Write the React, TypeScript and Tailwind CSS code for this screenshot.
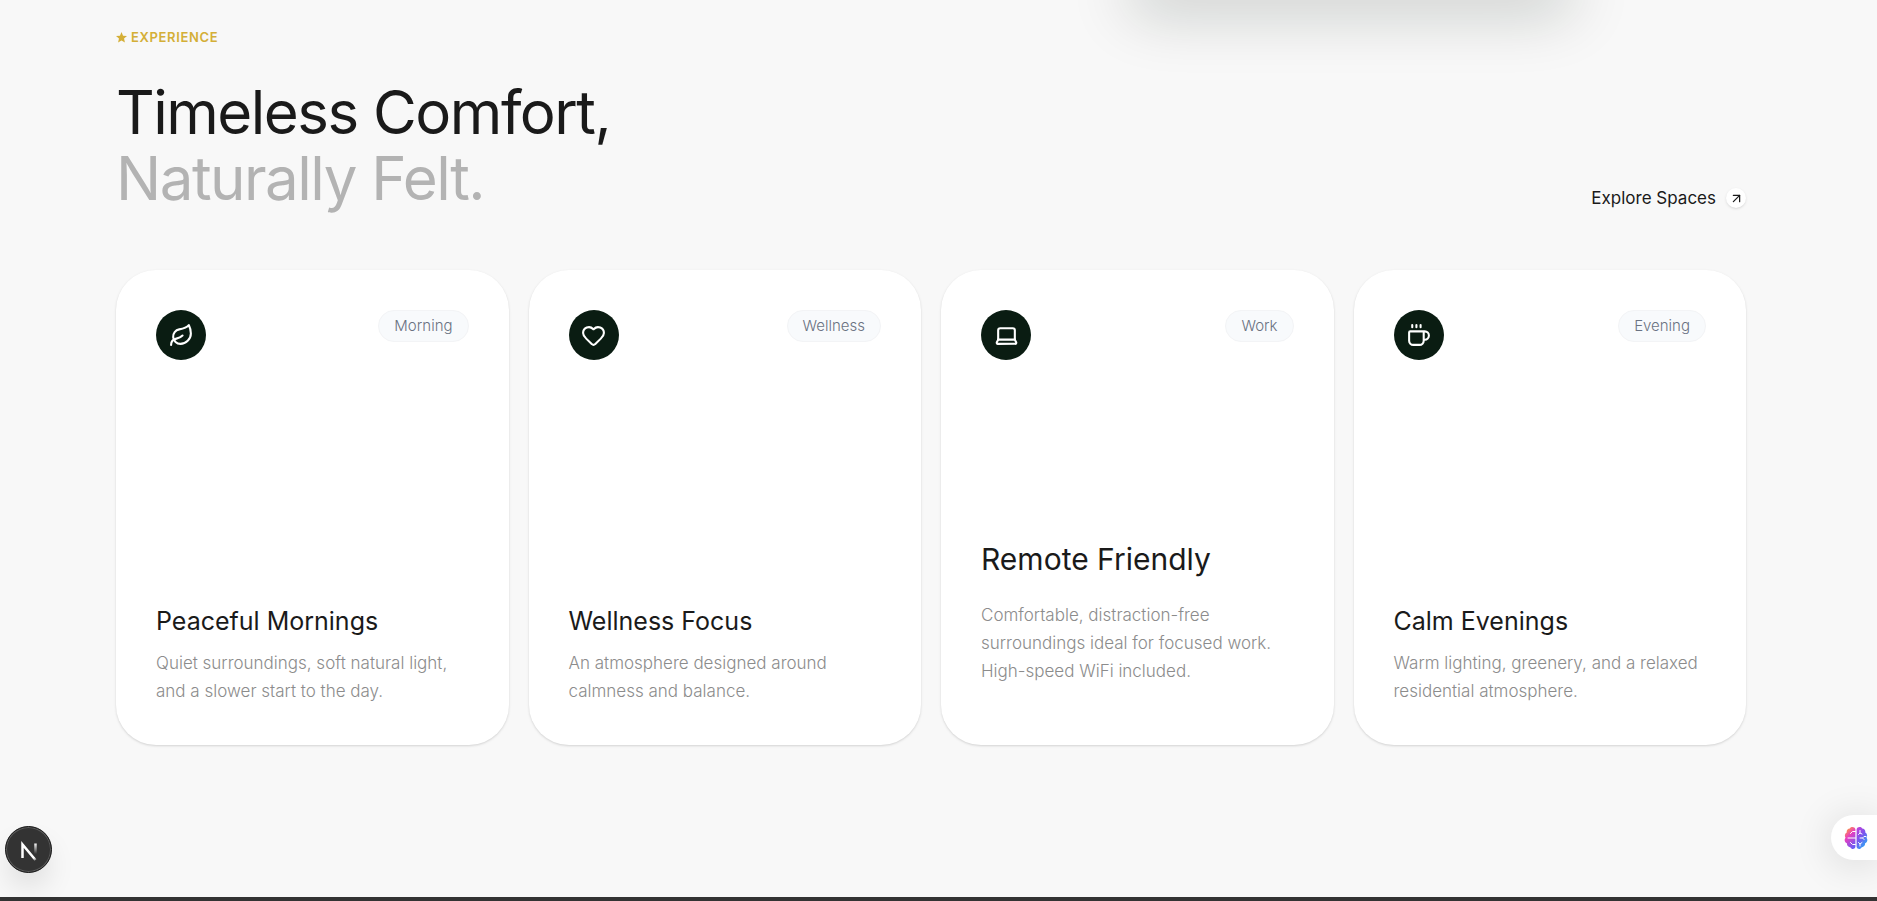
import { ArrowUpRight, Coffee, Heart, Laptop, Leaf, type LucideIcon } from "lucide-react";

type Experience = {
  icon: LucideIcon;
  tag: string;
  title: string;
  text: string;
  featured?: boolean;
};

const experiences: Experience[] = [
  {
    icon: Leaf,
    tag: "Morning",
    title: "Peaceful Mornings",
    text: "Quiet surroundings, soft natural light, and a slower start to the day.",
  },
  {
    icon: Heart,
    tag: "Wellness",
    title: "Wellness Focus",
    text: "An atmosphere designed around calmness and balance.",
  },
  {
    icon: Laptop,
    tag: "Work",
    title: "Remote Friendly",
    text: "Comfortable, distraction-free surroundings ideal for focused work. High-speed WiFi included.",
    featured: true,
  },
  {
    icon: Coffee,
    tag: "Evening",
    title: "Calm Evenings",
    text: "Warm lighting, greenery, and a relaxed residential atmosphere.",
  },
];

function ExperienceCard({ icon: Icon, tag, title, text, featured }: Experience) {
  return (
    <article className="flex min-h-[475px] flex-col justify-between rounded-[40px] bg-white p-10 shadow-[0_1px_3px_rgba(0,0,0,0.1),0_1px_2px_rgba(0,0,0,0.06)]">
      <div className="flex items-start justify-between">
        <span className="flex size-[50px] items-center justify-center rounded-full bg-[#0a1c12] text-white">
          <Icon size={25} strokeWidth={2} aria-hidden="true" />
        </span>
        <span className="rounded-full border border-gray-100 bg-[#f8fafc] px-[15px] py-1 text-[15px] leading-[22px] font-light text-gray-500">
          {tag}
        </span>
      </div>
      <div className={featured ? "pb-5" : ""}>
        <h3
          className={
            featured
              ? "mb-6 text-[30px] leading-9 text-[#1a1a1a]"
              : "mb-3 text-[25px] leading-8 text-[#1a1a1a]"
          }
        >
          {title}
        </h3>
        <p className="text-[17px] leading-7 font-light text-[#8c8c8c]">{text}</p>
      </div>
    </article>
  );
}

function BrainIcon() {
  return (
    <svg viewBox="0 0 24 24" className="size-6" aria-hidden="true">
      <defs>
        <linearGradient id="brain-left" x1="0.2" y1="0" x2="0.7" y2="1">
          <stop offset="0.05" stopColor="#ff9a3d" />
          <stop offset="0.4" stopColor="#e83fc0" />
          <stop offset="1" stopColor="#6a5cf5" />
        </linearGradient>
        <linearGradient id="brain-right" x1="0" y1="0" x2="0.6" y2="1">
          <stop offset="0" stopColor="#c93fd6" />
          <stop offset="0.5" stopColor="#7a55ee" />
          <stop offset="1" stopColor="#2fa4f5" />
        </linearGradient>
      </defs>
      <path
        fill="url(#brain-left)"
        d="M11.4 3.2C10.8.9 7.2.2 5.8 2.6 3.6 2.6 2.2 4.6 2.8 6.6.9 7.6.3 10 1.5 11.7-.1 13.6.6 16.5 2.9 17.2 2.7 19.7 4.4 21.4 6.3 21.2 7.5 23.8 10.8 23.4 11.4 21z"
      />
      <path
        fill="url(#brain-right)"
        d="M12.6 3.2C13.2.9 16.8.2 18.2 2.6 20.4 2.6 21.8 4.6 21.2 6.6 23.1 7.6 23.7 10 22.5 11.7 24.1 13.6 23.4 16.5 21.1 17.2 21.3 19.7 19.6 21.4 17.7 21.2 16.5 23.8 13.2 23.4 12.6 21z"
      />
      <g fill="none" stroke="#fff" strokeWidth="1" strokeLinecap="round" strokeLinejoin="round">
        <path d="M11.4 5.5H8.500L6.500 7.500M11.400 12H4M11.400 18.500H8.500L6.500 16.500" />
        <path d="M16 4.500v2.500M14.500 8.500 16 7l2 1M22 10.500h-2l-1.500 1.500H16M18.500 12 20 13.500M14.500 16.500 16 18l2-1.500M16 18v2" />
      </g>
    </svg>
  );
}

function NextMark() {
  return (
    <svg viewBox="0 0 40 40" className="size-10 shrink-0" fill="none" aria-hidden="true">
      <defs>
        <linearGradient id="n-diagonal" x1="22" y1="22" x2="28" y2="31" gradientUnits="userSpaceOnUse">
          <stop stopColor="#fff" />
          <stop offset="0.6" stopColor="#fff" />
          <stop offset="1" stopColor="#fff" stopOpacity="0.1" />
        </linearGradient>
        <linearGradient id="n-stem" x1="26" y1="13" x2="26" y2="24" gradientUnits="userSpaceOnUse">
          <stop stopColor="#fff" />
          <stop offset="1" stopColor="#fff" stopOpacity="0" />
        </linearGradient>
      </defs>
      <path d="M13.500 28V14.500L26.500 30" stroke="url(#n-diagonal)" strokeWidth="2.500" />
      <path d="M26.500 13.500V24" stroke="url(#n-stem)" strokeWidth="2.500" />
    </svg>
  );
}

export default function App() {
  return (
    <div className="relative flex min-h-screen flex-col overflow-hidden bg-[#f8f8f8] font-['Inter','Liberation_Sans',sans-serif] text-[#1a1a1a]">
      <div className="absolute -top-20 right-[286px] h-20 w-[480px] rounded-[40px] shadow-[0_30px_60px_-15px_rgba(10,28,18,0.19)]" />

      <main className="grow pt-[29px] pr-[131px] pb-20 pl-[116px]">
        <p className="flex items-center gap-1 text-[13px] leading-4 font-semibold tracking-wider text-[#d4af37]">
          <svg viewBox="0 0 10 10" className="size-[11px]" fill="currentColor" aria-hidden="true">
            <path d="M5 0 6.400 3.300 10 3.700 7.300 6 8.100 9.600 5 7.700 1.900 9.600 2.700 6 0 3.700 3.600 3.300z" />
          </svg>
          EXPERIENCE
        </p>

        <div className="mt-[34px] flex items-end justify-between">
          <h2 className="text-[60px] leading-[66px] font-normal tracking-tight">
            Timeless Comfort,
            <br />
            <span className="text-[#b3b3b3]">Naturally Felt.</span>
          </h2>
          <a href="#spaces" className="flex items-center gap-[10px] pb-px text-[17px] leading-6">
            Explore Spaces
            <span className="flex size-5 items-center justify-center rounded-full bg-white shadow-sm">
              <ArrowUpRight size={15} strokeWidth={2} aria-hidden="true" />
            </span>
          </a>
        </div>

        <section className="mt-[59px] grid grid-cols-4 gap-5">
          {experiences.map((item) => (
            <ExperienceCard key={item.title} {...item} />
          ))}
        </section>
      </main>

      <footer className="h-1 bg-[#333333]" />

      <button
        type="button"
        aria-label="Open developer tools"
        className="absolute bottom-7 left-[5px] flex size-[47px] items-center justify-center rounded-full border border-[#171717] bg-[#333333] shadow-[inset_0_0_0_1px_#5a5a5a,0_16px_32px_-8px_rgba(0,0,0,0.2)]"
      >
        <NextMark />
      </button>

      <button
        type="button"
        aria-label="Open assistant"
        className="absolute right-0 bottom-[41px] flex h-[45px] w-[46px] items-center rounded-l-full bg-white pl-[13px] shadow-[0_4px_40px_rgba(0,0,0,0.14)]"
      >
        <BrainIcon />
      </button>
    </div>
  );
}
